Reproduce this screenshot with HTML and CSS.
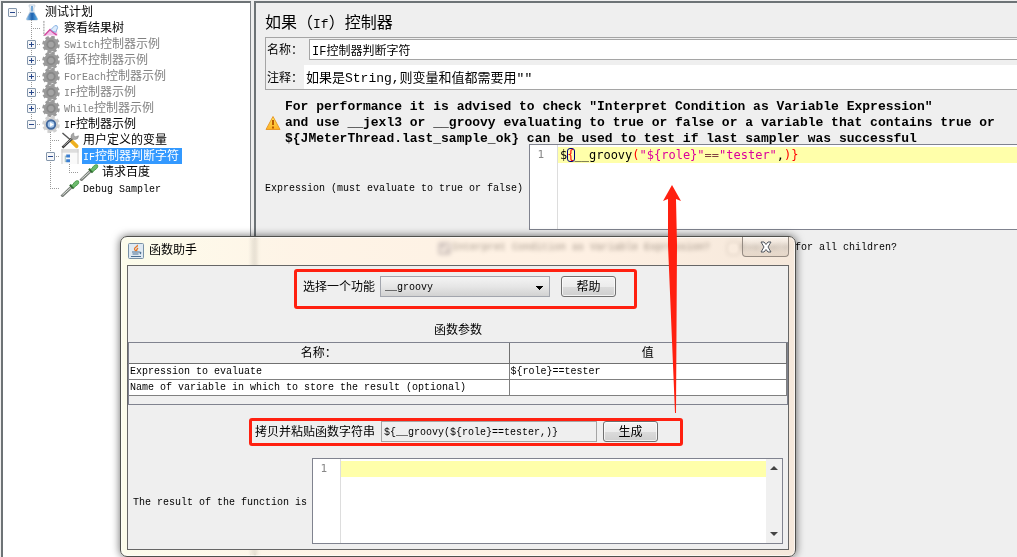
FILE: index.html
```html
<!DOCTYPE html>
<html lang="zh-CN">
<head>
    <meta charset="UTF-8">
    <meta name="viewport" content="width=device-width, initial-scale=1.0">
    <title>测试计划</title>
    <link rel="stylesheet" href="styles.css">
</head>
<body>
    <!-- Icons -->
    <svg class="defs" aria-hidden="true">
        <defs>
            <linearGradient id="warn" x1="0" y1="0" x2="0" y2="1">
                <stop offset="0" stop-color="#ffe860"/>
                <stop offset="1" stop-color="#ffb020"/>
            </linearGradient>
            <linearGradient id="liquid" x1="0" y1="0" x2="1" y2="0">
                <stop offset="0" stop-color="#9ccbee"/>
                <stop offset="0.5" stop-color="#1a5fae"/>
                <stop offset="1" stop-color="#62b4ea"/>
            </linearGradient>
            <symbol id="flask" viewBox="0 0 20 18">
                <path d="M7 1h6v2l-1 1v4l4 8q0 1-1 1H5q-1 0-1-1l4-8V4L7 3z" fill="#e9eff6" stroke="#c6d1dd"/>
                <path d="M8 9h4l4 7q0 1-1 1H5q-1 0-1-1z" fill="url(#liquid)"/>
                <path d="M10 2v6" stroke="#6fa5d6" stroke-width="2"/>
            </symbol>
            <symbol id="chart" viewBox="0 0 18 18">
                <path d="M1.500 1v16" stroke="#888" stroke-dasharray="2 1"/>
                <path d="M2 16.500L8 10l3 2 4-3 1 7.500z" fill="#f3c0ea"/>
                <path d="M2 16.500L8 10l3 3 4 3" fill="none" stroke="#d1489d" stroke-width="1.500"/>
                <path d="M9 10l4-4q3-1 3 2l-2 5-3-1z" fill="#dcebfc" stroke="#82aee0"/>
            </symbol>
            <symbol id="gear" viewBox="0 0 20 18">
                <circle cx="10" cy="9" r="7.800" fill="none" stroke="currentColor" stroke-width="3" stroke-dasharray="3.600 2.526"/>
                <circle cx="10" cy="9" r="7.600" fill="currentColor"/>
            </symbol>
            <symbol id="gear-off" viewBox="0 0 20 18">
                <use href="#gear"/>
                <circle cx="10" cy="9" r="4" fill="#a4a4a4" stroke="#888" stroke-width="2"/>
            </symbol>
            <symbol id="gear-on" viewBox="0 0 20 18">
                <use href="#gear"/>
                <circle cx="10" cy="9" r="4.500" fill="#a9c9ec" stroke="#41689e" stroke-width="2"/>
                <path d="M9 6.500l4 2.500-4 2.500z" fill="#fff"/>
            </symbol>
            <symbol id="tools" viewBox="0 0 18 18">
                <path d="M1 1l8 7" stroke="#555" stroke-width="1.500"/>
                <path d="M10 9l6 6" stroke="#eeb01f" stroke-width="4" stroke-linecap="round"/>
                <path d="M1 16.500L12 6" stroke="#333" stroke-width="2.500"/>
                <path d="M2 15L12 6" stroke="#bbb"/>
                <path d="M13 1q-3 1-3 4t4 3q4 0 4-4l-3 1-2-1z" fill="#aaa" stroke="#777" stroke-width="0.500"/>
            </symbol>
            <symbol id="ifctl" viewBox="0 0 18 18">
                <path d="M0 1h18v16H0z" fill="#fafafa"/>
                <path d="M0 1h18v4H0z" fill="#ddd"/>
                <path d="M0.500 1v16M17.500 1v16" stroke="#ccc"/>
                <path d="M4 8v7M4 9h2M4 14h2" stroke="#9bb" fill="none"/>
                <path d="M5 7h4v3H5zM5 12h4v3H5z" fill="#3c7fd0"/>
            </symbol>
            <symbol id="pipette" viewBox="0 0 18 18">
                <path d="M0 17.500L11 7" stroke="#777d77" stroke-width="3"/>
                <path d="M1 16l9-8" stroke="#e4e8e4"/>
                <path d="M9 5l4 4" stroke="#2f6b2f" stroke-width="2.500"/>
                <path d="M11 6l3-4q2-2 4-1 1 2-1 4l-4 3z" fill="#6cbb6c" stroke="#4a9a4a"/>
            </symbol>
        </defs>
    </svg>

    <div class="workbench">
        <!-- Test plan tree -->
        <nav class="tree">
            <div class="node">
                <span class="cell stub"><button class="toggle" type="button" aria-label="收起"></button></span>
                <svg class="icon"><use href="#flask"/></svg>
                <span class="name">测试计划</span>
            </div>
            <div class="node">
                <span class="cell"></span><span class="cell branch"></span>
                <svg class="icon"><use href="#chart"/></svg>
                <span class="name">察看结果树</span>
            </div>
            <div class="node off">
                <span class="cell"></span><span class="cell branch"><button class="toggle plus" type="button" aria-label="展开"></button></span>
                <svg class="icon"><use href="#gear-off"/></svg>
                <span class="name"><i>Switch</i>控制器示例</span>
            </div>
            <div class="node off">
                <span class="cell"></span><span class="cell branch"><button class="toggle plus" type="button" aria-label="展开"></button></span>
                <svg class="icon"><use href="#gear-off"/></svg>
                <span class="name">循环控制器示例</span>
            </div>
            <div class="node off">
                <span class="cell"></span><span class="cell branch"><button class="toggle plus" type="button" aria-label="展开"></button></span>
                <svg class="icon"><use href="#gear-off"/></svg>
                <span class="name"><i>ForEach</i>控制器示例</span>
            </div>
            <div class="node off">
                <span class="cell"></span><span class="cell branch"><button class="toggle plus" type="button" aria-label="展开"></button></span>
                <svg class="icon"><use href="#gear-off"/></svg>
                <span class="name"><i>IF</i>控制器示例</span>
            </div>
            <div class="node off">
                <span class="cell"></span><span class="cell branch"><button class="toggle plus" type="button" aria-label="展开"></button></span>
                <svg class="icon"><use href="#gear-off"/></svg>
                <span class="name"><i>While</i>控制器示例</span>
            </div>
            <div class="node">
                <span class="cell"></span><span class="cell corner"><button class="toggle" type="button" aria-label="收起"></button></span>
                <svg class="icon"><use href="#gear-on"/></svg>
                <span class="name"><i>IF</i>控制器示例</span>
            </div>
            <div class="node">
                <span class="cell"></span><span class="cell"></span><span class="cell branch"></span>
                <svg class="icon"><use href="#tools"/></svg>
                <span class="name">用户定义的变量</span>
            </div>
            <div class="node selected">
                <span class="cell"></span><span class="cell"></span><span class="cell branch"><button class="toggle" type="button" aria-label="收起"></button></span>
                <svg class="icon"><use href="#ifctl"/></svg>
                <span class="name"><i>IF</i>控制器判断字符</span>
            </div>
            <div class="node">
                <span class="cell"></span><span class="cell"></span><span class="cell pass"></span><span class="cell corner"></span>
                <svg class="icon"><use href="#pipette"/></svg>
                <span class="name">请求百度</span>
            </div>
            <div class="node">
                <span class="cell"></span><span class="cell"></span><span class="cell corner"></span>
                <svg class="icon"><use href="#pipette"/></svg>
                <span class="name"><i>Debug Sampler</i></span>
            </div>
        </nav>

        <!-- If controller panel -->
        <main class="panel">
            <h1>如果（<i>If</i>）控制器</h1>
            <div class="props">
                <div class="prop">
                    <label for="name">名称：</label>
                    <input id="name" type="text" value="IF控制器判断字符">
                </div>
                <div class="prop comment">
                    <label for="comment">注释：</label>
                    <input id="comment" type="text" value="如果是String,则变量和值都需要用&quot;&quot;">
                </div>
            </div>

            <div class="advice">
                <svg class="warning" viewBox="0 0 16 16">
                    <path d="M8 1.500L15 14.500H1z" fill="url(#warn)" stroke="#e8992a" stroke-linejoin="round"/>
                    <path d="M8 5v5M8 11.500v2" stroke="#b85a00" stroke-width="2"/>
                </svg>
                <p>For performance it is advised to check "Interpret Condition as Variable Expression"<br>and use __jexl3 or __groovy evaluating to true or false or a variable that contains true or<br>${JMeterThread.last_sample_ok} can be used to test if last sampler was successful</p>
            </div>

            <div class="expression">
                <span class="caption">Expression (must evaluate to true or false)</span>
                <div class="editor">
                    <div class="gutter">1</div>
                    <pre class="code">$<b class="match">{</b>__groovy<b>(</b><em>"${role}"</em><u>==</u><em>"tester"</em>,<b>)}</b></pre>
                </div>
            </div>

            <div class="options">
                <label><input type="checkbox" checked>Interpret Condition as Variable Expression?</label>
                <label><input type="checkbox">Evaluate for all children?</label>
            </div>
        </main>
    </div>

    <!-- Function helper window -->
    <section class="dialog">
        <header class="titlebar">
            <svg class="java" viewBox="0 0 16 16">
                <rect x="0.500" y="0.500" width="15" height="15" rx="1" fill="#dfeaf3" stroke="#7991a6"/>
                <path d="M8 8q-3-2 0-4 2-1 1-2M9 8q-1-1 1-3" fill="none" stroke="#e8731f" stroke-width="1.300"/>
                <path d="M4 9h7M4.500 11h6M3 13.500h10M11 9q3 0 1 2" fill="none" stroke="#4c6f92" stroke-width="1.200"/>
            </svg>
            <h2>函数助手</h2>
            <button class="close" type="button" aria-label="关闭">
                <svg viewBox="0 0 12 12"><path d="M1 1h3l2 2.500L8 1h3L8 6l3 5H8L6 8.500 4 11H1l3-5z" fill="#fff" stroke="#4f545c"/></svg>
            </button>
        </header>

        <div class="content">
            <div class="marked choose">
                <label for="func">选择一个功能</label>
                <select id="func">
                    <option>__groovy</option>
                </select>
                <button class="btn" type="button">帮助</button>
            </div>

            <h3>函数参数</h3>
            <div class="params">
                <table>
                    <thead>
                        <tr><th class="key">名称：</th><th>值</th></tr>
                    </thead>
                    <tbody>
                        <tr><td>Expression to evaluate</td><td>${role}==tester</td></tr>
                        <tr><td>Name of variable in which to store the result (optional)</td><td></td></tr>
                    </tbody>
                </table>
            </div>

            <div class="marked generate">
                <label for="call">拷贝并粘贴函数字符串</label>
                <input id="call" type="text" readonly value="${__groovy(${role}==tester,)}">
                <button class="btn" type="button">生成</button>
            </div>

            <div class="result">
                <label class="caption" for="result">The result of the function is</label>
                <div class="editor">
                    <div class="gutter">1</div>
                    <textarea id="result" class="code"></textarea>
                    <div class="scroll">
                        <svg viewBox="0 0 8 4"><path d="M0 4l4-4 4 4z"/></svg>
                        <svg viewBox="0 0 8 4"><path d="M0 0h8L4 4z"/></svg>
                    </div>
                </div>
            </div>
        </div>
    </section>

    <!-- Arrow from the generated string up to the expression -->
    <svg class="arrow" viewBox="0 0 20 228" aria-hidden="true">
        <path d="M10 0L19 16 14 14 15 60 14 228H13L6 60 6 14 1 16z" fill="#ff2010"/>
    </svg>
</body>
</html>
```

FILE: styles.css
```css
* {
    box-sizing: border-box;
}
body {
    margin: 0;
    overflow: hidden;
    background: #efefef;
    color: #000;
    font-family: "Liberation Mono", "Noto Sans CJK SC", monospace;
    font-size: 12px;
    line-height: 16px;
}
input, select, button, textarea {
    margin: 0;
    font-family: inherit;
    font-size: 12px;
    color: inherit;
}
h1, h2, h3, p, pre {
    margin: 0;
    font-weight: normal;
}
i {
    font-style: normal;
    font-size: 10px;
}
.defs {
    display: block;
    width: 0;
    height: 0;
}
.workbench {
    display: flex;
    gap: 3px;
    min-height: 100vh;
    padding: 1px 0 0 1px;
}

/* tree */
.tree {
    flex: 0 0 250px;
    padding: 1px 0;
    background: #fff;
    border: 2px solid #6d7376;
    border-right: 1px solid #808488;
    border-bottom: 0;
}
.node {
    display: flex;
    height: 16px;
}
.cell {
    display: flex;
    align-items: center;
    width: 19px;
    height: 16px;
    padding-left: 9px;
    background-origin: content-box;
    background-clip: content-box;
    background-repeat: no-repeat;
}
/* dotted connectors */
.stub {
    background-image: repeating-linear-gradient(90deg, #999 0 1px, transparent 1px 2px);
    background-size: 10px 1px;
    background-position: 0 8px;
}
.pass {
    background-image: repeating-linear-gradient(#999 0 1px, transparent 1px 2px);
    background-size: 1px 16px;
}
.branch, .corner {
    background-image: repeating-linear-gradient(#999 0 1px, transparent 1px 2px), repeating-linear-gradient(90deg, #999 0 1px, transparent 1px 2px);
    background-size: 1px 16px, 10px 1px;
    background-position: 0 0, 0 8px;
}
.corner {
    background-size: 1px 8px, 10px 1px;
}
.toggle {
    flex: none;
    width: 9px;
    height: 9px;
    margin-left: -4px;
    padding: 0;
    border: 1px solid #8496ab;
    border-radius: 1px;
    background: linear-gradient(#28488c, #28488c) 1px 3px / 5px 1px no-repeat, #f5f6f8;
}
.toggle.plus {
    background: linear-gradient(#28488c, #28488c) 1px 3px / 5px 1px no-repeat, linear-gradient(#28488c, #28488c) 3px 1px / 1px 5px no-repeat, #f5f6f8;
}
.icon {
    flex: none;
    width: 20px;
    height: 17px;
    overflow: visible;
    color: #d0d0d0;
}
.off .icon {
    color: #9a9a9a;
}
.name {
    margin-left: 2px;
    padding: 0 1px;
    line-height: 18px;
    white-space: nowrap;
}
.off .name {
    color: #808080;
}
.selected .name {
    padding-right: 3px;
    background: #3399ff;
    color: #fff;
}

/* controller panel */
.panel {
    flex: 1;
    min-width: 0;
    padding: 9px 0 0 9px;
    border-top: 2px solid #6d7376;
    border-left: 2px solid #6d7376;
}
.panel h1 {
    height: 25px;
    font-size: 16px;
    line-height: 24px;
}
.panel h1 i {
    font-size: 13px;
}
.props {
    padding: 1px 0 0 1px;
    border: 1px solid #a5a5a5;
    border-right: 0;
}
.prop {
    display: flex;
    align-items: center;
}
.prop label {
    flex: none;
    width: 42px;
    padding-top: 3px;
    white-space: nowrap;
}
.prop input {
    flex: 1;
    height: 21px;
    padding: 0 2px;
    border: 1px solid #a5a5a5;
    border-right: 0;
    background: #fff;
}
.comment {
    margin-top: 5px;
}
.comment label {
    width: 37px;
}
.comment input {
    height: 24px;
    padding-bottom: 2px;
    border: 0;
    font-size: 13px;
}
.advice {
    display: flex;
    align-items: center;
    gap: 4px;
    height: 48px;
    margin: 9px 0 -3px;
}
.warning {
    flex: none;
    width: 16px;
    height: 16px;
}
.advice p {
    font-size: 13px;
    font-weight: bold;
    white-space: nowrap;
}
.caption {
    flex: none;
    padding-top: 3px;
    font-size: 10px;
}
.expression {
    display: flex;
    align-items: center;
    gap: 6px;
}
.editor {
    flex: 1;
    display: flex;
    min-width: 0;
    height: 86px;
    border: 1px solid #80838f;
    background: #fff;
}
.panel .editor {
    position: relative;
    border-right: 0;
}
.gutter {
    flex: none;
    width: 28px;
    padding: 2px 13px 0 0;
    border-right: 1px solid #ddd;
    color: #888;
    font-family: "DejaVu Sans Mono", monospace;
    font-size: 11px;
    text-align: right;
}
.code {
    flex: 1;
    margin-top: 2px;
    padding: 0 0 0 2px;
    border: 0;
    background: linear-gradient(#ffffaa, #ffffaa) 0 0 / 100% 16px no-repeat;
    font-family: "DejaVu Sans Mono", monospace;
    font-size: 12px;
    line-height: 16px;
    resize: none;
}
.code b {
    color: #f00;
    font-weight: normal;
}
.code em {
    color: #dc009c;
    font-style: normal;
}
.code u {
    color: #804040;
    text-decoration: none;
}
.code .match {
    border-radius: 3px;
    outline: 1px solid #000080;
    outline-offset: -1px;
}
.options {
    display: flex;
    gap: 17px;
    margin: 10px 0 0 173px;
    font-size: 10px;
    white-space: nowrap;
}
.options label {
    display: flex;
    align-items: center;
}
.options input {
    width: 13px;
    height: 13px;
    margin-right: 1px;
    accent-color: #8a8a9a;
}

/* function helper */
.dialog {
    position: absolute;
    top: 236px;
    left: 120px;
    width: 676px;
    padding: 0 6px 6px;
    border: 1px solid #50504c;
    border-radius: 7px;
    background: linear-gradient(90deg, rgba(250, 250, 222, 0.6), rgba(255, 238, 216, 0.6) 25%, rgba(255, 232, 210, 0.6) 70%, rgba(240, 218, 196, 0.6));
    box-shadow: 0 0 8px rgba(0, 0, 0, 0.6), inset 0 0 0 1px rgba(255, 255, 255, 0.6);
    backdrop-filter: blur(2px) brightness(1.06);
}
.titlebar {
    display: flex;
    align-items: flex-start;
    height: 28px;
    padding-left: 1px;
}
.java {
    width: 16px;
    height: 16px;
    margin-top: 6px;
}
.titlebar h2 {
    flex: 1;
    margin: 6px 0 0 5px;
    font-size: 12px;
}
.close {
    width: 47px;
    height: 20px;
    padding: 0;
    border: 1px solid #958b82;
    border-top: 0;
    border-radius: 0 0 4px 4px;
    background: linear-gradient(rgba(255, 255, 255, 0.4), rgba(160, 140, 120, 0.2));
    line-height: 0;
}
.close svg {
    width: 14px;
    height: 12px;
}
.content {
    padding: 3px 0 5px;
    border: 1px solid #666;
    background: #efefef;
}
.marked {
    display: flex;
    align-items: center;
    width: fit-content;
    border: 3px solid #ff2010;
    border-radius: 3px;
}
.marked label {
    padding-top: 3px;
    white-space: nowrap;
}
.choose {
    margin-left: 166px;
    padding: 4px 18px 9px 6px;
}
.choose select {
    width: 170px;
    height: 21px;
    margin: 0 11px 0 5px;
    padding: 2px 4px 0;
    border: 1px solid #a2a5ad;
    border-radius: 0;
    appearance: none;
    background:
        linear-gradient(to bottom left, #000 50%, transparent 50%) right 9px top 9px / 4px 4px no-repeat,
        linear-gradient(to bottom right, #000 50%, transparent 50%) right 5px top 9px / 4px 4px no-repeat,
        linear-gradient(#f4f4f4, #e6e6e6 50%, #d2d2d2);
    font-size: 10px;
}
.btn {
    width: 55px;
    height: 21px;
    padding: 2px 0 0;
    border: 1px solid #707070;
    border-radius: 3px;
    background: linear-gradient(#f4f4f4, #ececec 50%, #dcdcdc 50%, #cfcfcf);
    box-shadow: inset 0 0 0 1px rgba(255, 255, 255, 0.7);
    line-height: 16px;
}
.content h3 {
    margin: 14px 0 3px;
    font-size: 12px;
    text-align: center;
}
.params {
    height: 63px;
    border: 1px solid #80838f;
}
.params table {
    width: 100%;
    border-collapse: collapse;
    table-layout: fixed;
    font-size: 10px;
}
.params tr {
    height: 16px;
}
.params th {
    height: 20px;
    padding: 2px 0 0;
    border-right: 1px solid #707070;
    border-bottom: 1px solid #707070;
    font-size: 12px;
    font-weight: normal;
    line-height: 16px;
}
.params .key {
    width: 380px;
}
.params td {
    padding: 0 1px;
    border-right: 1px solid #808080;
    border-bottom: 1px solid #808080;
    background: #fff;
    line-height: 15px;
    white-space: nowrap;
}
.generate {
    margin: 13px 0 0 121px;
    padding: 0 22px 1px 3px;
}
.generate input {
    width: 216px;
    height: 21px;
    margin: 0 6px;
    padding: 2px 2px 0;
    border: 1px solid #a5a5a5;
    background: #efefef;
    font-size: 10px;
}
.result {
    display: flex;
    align-items: center;
    gap: 5px;
    margin: 12px 5px 0 5px;
}
.scroll {
    display: flex;
    flex-direction: column;
    justify-content: space-between;
    align-items: center;
    width: 16px;
    padding: 7px 0;
    background: #f0f0f0;
}
.scroll svg {
    width: 8px;
    height: 4px;
    fill: #444;
}

.arrow {
    position: absolute;
    top: 185px;
    left: 662px;
    width: 20px;
    height: 228px;
}
```
